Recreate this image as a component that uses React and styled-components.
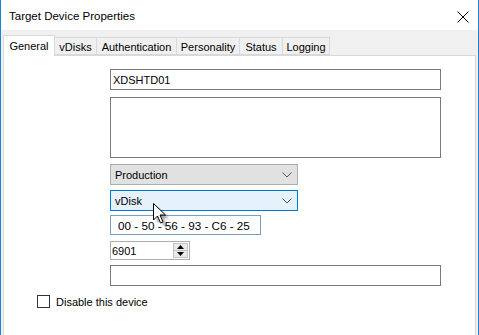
import styled, { createGlobalStyle } from 'styled-components';

const GlobalStyle = createGlobalStyle`
  html, body {
    margin: 0;
    padding: 0;
    overflow: hidden;
    background: #ffffff;
  }
  * {
    box-sizing: border-box;
  }
`;

const tabs = [
  { label: 'General', width: 52, selected: true },
  { label: 'vDisks', width: 43 },
  { label: 'Authentication', width: 81 },
  { label: 'Personality', width: 64 },
  { label: 'Status', width: 44 },
  { label: 'Logging', width: 48 },
];

function Chevron() {
  return (
    <svg width="10" height="6" viewBox="0 0 10 6">
      <path d="M0.5 0.5 L5 5 L9.5 0.5" fill="none" stroke="#555" strokeWidth="1" />
    </svg>
  );
}

function Cursor() {
  return (
    <CursorWrap>
      <svg width="22" height="26" viewBox="0 0 22 26">
        <defs>
          <filter id="sh" x="-50%" y="-50%" width="200%" height="200%">
            <feGaussianBlur stdDeviation="1.2" />
          </filter>
        </defs>
        <path
          d="M2.5 2.5 L2.5 19 L6.5 15 L9.5 22 L12 21 L9 14 L14.5 14 Z"
          fill="rgba(0,0,0,0.35)"
          filter="url(#sh)"
          transform="translate(1.5,1.5)"
        />
        <path
          d="M0.5 0.5 L0.5 17 L4.5 13 L7.5 20 L10 19 L7 12 L12.5 12 Z"
          fill="#fff"
          stroke="#000"
          strokeWidth="1"
          strokeLinejoin="miter"
        />
      </svg>
    </CursorWrap>
  );
}

export default function App() {
  return (
    <>
      <GlobalStyle />
      <Window>
        <TitleBar>
          <Title>Target Device Properties</Title>
          <CloseButton>
            <svg width="12" height="12" viewBox="0 0 12 12">
              <path d="M0.5 0.5 L11.5 11.5 M11.5 0.5 L0.5 11.5" stroke="#000" strokeWidth="1" />
            </svg>
          </CloseButton>
        </TitleBar>

        <Body>
          <TabStrip>
            {tabs.map((t) => (
              <Tab key={t.label} $width={t.width} $selected={t.selected}>
                {t.label}
              </Tab>
            ))}
          </TabStrip>

          <Panel>
            <FieldColumn>
              <TextBox $top={0} $width={331}>XDSHTD01</TextBox>
              <TextArea $top={7} />
              <Combo $top={6}>
                Production
                <Chevron />
              </Combo>
              <Combo $top={5} $focused>
                vDisk
                <Chevron />
              </Combo>
              <MacBox $top={4}>00 - 50 - 56 - 93 - C6 - 25</MacBox>
              <Numeric $top={6}>
                <NumericValue>6901</NumericValue>
                <SpinBox>
                  <SpinButton>
                    <svg width="7" height="4" viewBox="0 0 7 4">
                      <path d="M3.5 0 L7 4 L0 4 Z" fill="#000" />
                    </svg>
                  </SpinButton>
                  <SpinButton>
                    <svg width="7" height="4" viewBox="0 0 7 4">
                      <path d="M0 0 L7 0 L3.5 4 Z" fill="#000" />
                    </svg>
                  </SpinButton>
                </SpinBox>
              </Numeric>
              <TextBox $top={5} $width={331} />
            </FieldColumn>

            <CheckRow>
              <CheckBox />
              <CheckLabel>Disable this device</CheckLabel>
            </CheckRow>
          </Panel>
        </Body>

        <Cursor />
      </Window>
    </>
  );
}

const Window = styled.div`
  position: relative;
  width: 479px;
  height: 335px;
  display: flex;
  flex-direction: column;
  border-left: 1px solid #1883d7;
  border-right: 1px solid #1883d7;
  background: #ffffff;
  font-family: 'Liberation Sans', Arial, sans-serif;
  color: #000;
`;

const TitleBar = styled.div`
  height: 30px;
  display: flex;
  align-items: center;
  justify-content: space-between;
  padding: 2px 9px 0 8px;
  background: #ffffff;
`;

const Title = styled.div`
  font-family: 'Liberation Sans', Arial, sans-serif;
  font-size: 11.5px;
  color: #000;
`;

const CloseButton = styled.div`
  width: 12px;
  height: 12px;
  display: flex;
  margin-top: 1px;
`;

const Body = styled.div`
  flex: 1;
  display: flex;
  flex-direction: column;
  background: #f0f0f0;
  padding: 5px 2px 0 2px;
  min-height: 0;
`;

const TabStrip = styled.div`
  display: flex;
  align-items: flex-end;
  height: 20px;
  position: relative;
  z-index: 1;
`;

const Tab = styled.div`
  width: ${(p) => p.$width}px;
  height: ${(p) => (p.$selected ? 21 : 18)}px;
  margin-bottom: ${(p) => (p.$selected ? -1 : 0)}px;
  margin-left: ${(p) => (p.$selected ? 0 : -1)}px;
  display: flex;
  align-items: center;
  justify-content: center;
  padding-top: ${(p) => (p.$selected ? 0 : 1)}px;
  border: 1px solid #d9d9d9;
  border-bottom: ${(p) => (p.$selected ? 'none' : '1px solid #d9d9d9')};
  background: ${(p) => (p.$selected ? '#ffffff' : '#f0f0f0')};
  font-size: 11px;
  white-space: nowrap;
  &:first-child {
    margin-left: 0;
  }
`;

const Panel = styled.div`
  flex: 1;
  display: flex;
  flex-direction: column;
  background: #ffffff;
  border: 1px solid #d9d9d9;
  border-bottom: none;
  padding: 13px 0 0 33px;
`;

const FieldColumn = styled.div`
  display: flex;
  flex-direction: column;
  align-items: flex-start;
  margin-left: 73px;
  width: 331px;
`;

const TextBox = styled.div`
  margin-top: ${(p) => p.$top}px;
  width: ${(p) => p.$width}px;
  height: 21px;
  border: 1px solid #7a7a7a;
  background: #fff;
  padding: 0 2px;
  display: flex;
  align-items: center;
  font-size: 11px;
`;

const TextArea = styled.div`
  margin-top: ${(p) => p.$top}px;
  width: 331px;
  height: 61px;
  border: 1px solid #7a7a7a;
  background: #fff;
`;

const Combo = styled.div`
  margin-top: ${(p) => p.$top}px;
  width: 188px;
  height: 21px;
  display: flex;
  align-items: center;
  justify-content: space-between;
  padding: 0 5px 0 4px;
  border: 1px solid ${(p) => (p.$focused ? '#0078d7' : '#adadad')};
  background: ${(p) => (p.$focused ? '#e5f1fb' : '#e1e1e1')};
  font-size: 11px;
`;

const MacBox = styled.div`
  margin-top: ${(p) => p.$top}px;
  width: 151px;
  height: 20px;
  display: flex;
  align-items: center;
  padding-left: 7px;
  border: 1px solid #7f9db9;
  background: #fff;
  font-size: 11.7px;
  white-space: nowrap;
`;

const Numeric = styled.div`
  margin-top: ${(p) => p.$top}px;
  width: 80px;
  height: 19px;
  display: flex;
  align-items: stretch;
  border: 1px solid #adadad;
  background: #fff;
`;

const NumericValue = styled.div`
  flex: 1;
  display: flex;
  align-items: center;
  padding-left: 1px;
  font-size: 11px;
`;

const SpinBox = styled.div`
  width: 16px;
  display: flex;
  flex-direction: column;
  padding: 1px 1px 1px 0;
`;

const SpinButton = styled.div`
  flex: 1;
  display: flex;
  align-items: center;
  justify-content: center;
  background: #e9e9e9;
  border: 1px solid #c4c4c4;
  & + & {
    margin-top: -1px;
  }
`;

const CheckRow = styled.div`
  display: flex;
  align-items: center;
  margin-top: 9px;
`;

const CheckBox = styled.div`
  width: 13px;
  height: 13px;
  border: 1px solid #333;
  background: #fff;
`;

const CheckLabel = styled.div`
  margin-left: 6px;
  font-size: 11px;
`;

const CursorWrap = styled.div`
  position: absolute;
  left: 152px;
  top: 203px;
  width: 22px;
  height: 26px;
  pointer-events: none;
`;
